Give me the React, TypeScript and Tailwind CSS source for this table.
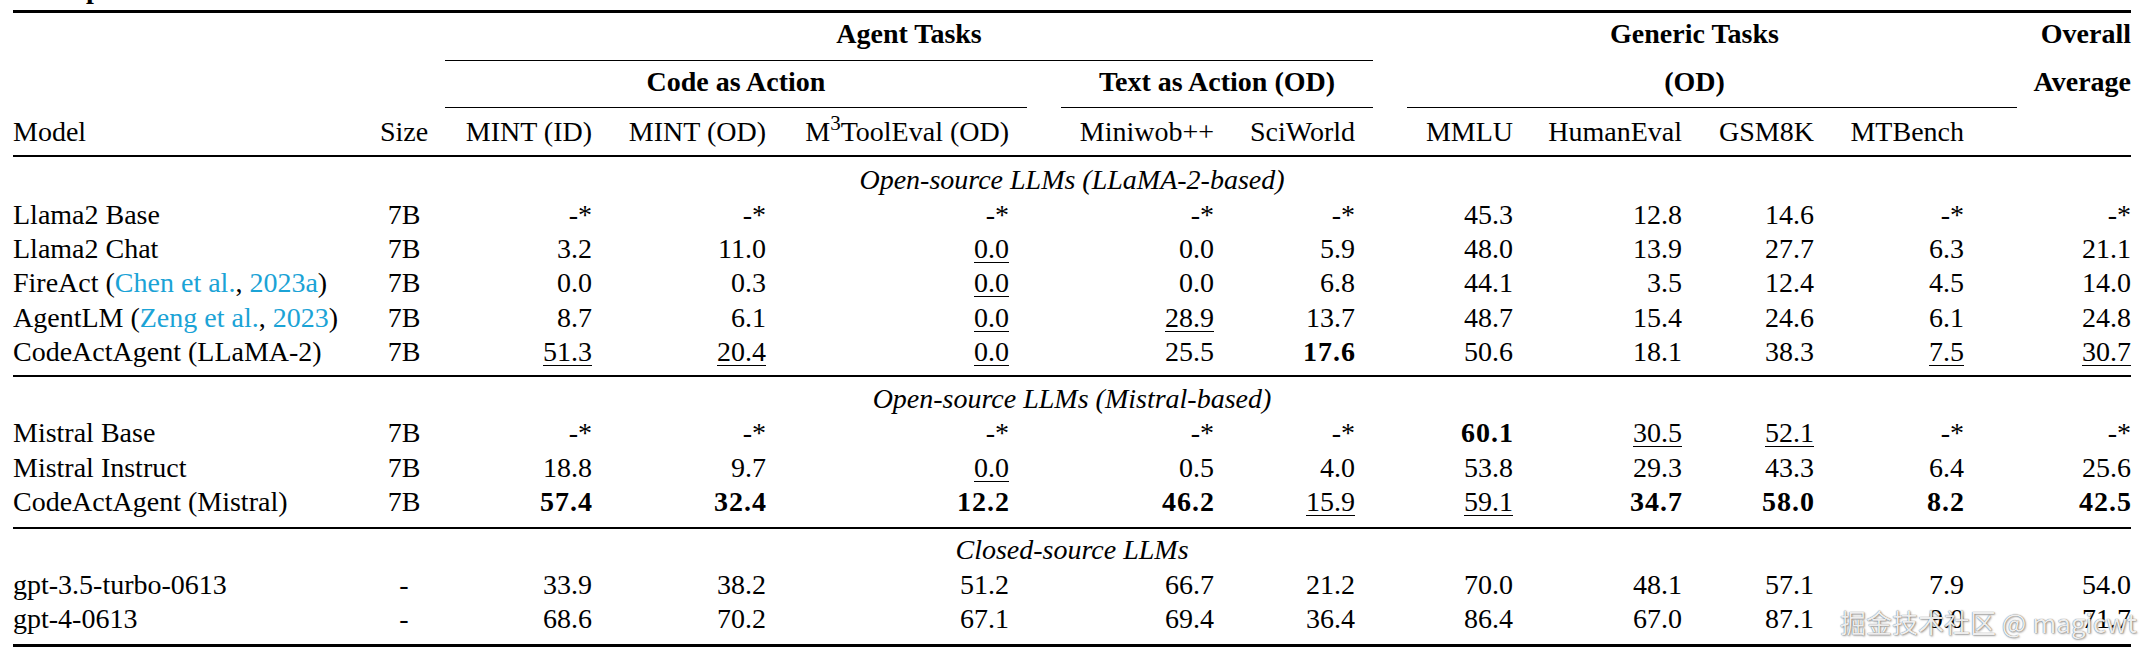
import React from "react";

// column template: Model | Size | MINT(ID) | MINT(OD) | M3ToolEval | Miniwob++ | SciWorld | MMLU | HumanEval | GSM8K | MTBench | Overall
const COLS =
  "grid grid-cols-[357px_68px_172px_174px_243px_205px_141px_158px_169px_132px_150px_149px]";

type Row = { name: React.ReactNode; size: string; vals: string[] };

/* ================= DATA ================= */
const llama: Row[] = [
  { name: "Llama2 Base", size: "7B", vals: ["-*", "-*", "-*", "-*", "-*", "45.3", "12.8", "14.6", "-*", "-*"] },
  { name: "Llama2 Chat", size: "7B", vals: ["3.2", "11.0", "_0.0_", "0.0", "5.9", "48.0", "13.9", "27.7", "6.3", "21.1"] },
  {
    name: (
      <>
        FireAct (<span className="text-[#1ba3d6]">Chen et al.</span>, <span className="text-[#1ba3d6]">2023a</span>)
      </>
    ),
    size: "7B",
    vals: ["0.0", "0.3", "_0.0_", "0.0", "6.8", "44.1", "3.5", "12.4", "4.5", "14.0"],
  },
  {
    name: (
      <>
        AgentLM (<span className="text-[#1ba3d6]">Zeng et al.</span>, <span className="text-[#1ba3d6]">2023</span>)
      </>
    ),
    size: "7B",
    vals: ["8.7", "6.1", "_0.0_", "_28.9_", "13.7", "48.7", "15.4", "24.6", "6.1", "24.8"],
  },
  { name: "CodeActAgent (LLaMA-2)", size: "7B", vals: ["_51.3_", "_20.4_", "_0.0_", "25.5", "**17.6**", "50.6", "18.1", "38.3", "_7.5_", "_30.7_"] },
];

const mistral: Row[] = [
  { name: "Mistral Base", size: "7B", vals: ["-*", "-*", "-*", "-*", "-*", "**60.1**", "_30.5_", "_52.1_", "-*", "-*"] },
  { name: "Mistral Instruct", size: "7B", vals: ["18.8", "9.7", "_0.0_", "0.5", "4.0", "53.8", "29.3", "43.3", "6.4", "25.6"] },
  { name: "CodeActAgent (Mistral)", size: "7B", vals: ["**57.4**", "**32.4**", "**12.2**", "**46.2**", "_15.9_", "_59.1_", "**34.7**", "**58.0**", "**8.2**", "**42.5**"] },
];

const closed: Row[] = [
  { name: "gpt-3.5-turbo-0613", size: "-", vals: ["33.9", "38.2", "51.2", "66.7", "21.2", "70.0", "48.1", "57.1", "7.9", "54.0"] },
  { name: "gpt-4-0613", size: "-", vals: ["68.6", "70.2", "67.1", "69.4", "36.4", "86.4", "67.0", "87.1", "9.0", "71.7"] },
];

/* ================= CELLS ================= */
function Val({ v }: { v: string }) {
  if (v.startsWith("**"))
    return <span className="font-bold tracking-[1px] -mr-[1px]">{v.slice(2, -2)}</span>;
  if (v.startsWith("_"))
    return <span className="underline decoration-1 underline-offset-[4px]">{v.slice(1, -1)}</span>;
  return <>{v}</>;
}

function DataRow({ row }: { row: Row }) {
  return (
    <div className={`${COLS} h-[34.4px] leading-[34.4px]`}>
      <div className="whitespace-nowrap">{row.name}</div>
      <div className="text-center">{row.size}</div>
      {row.vals.map((v, i) => (
        <div key={i} className={i === 9 ? "text-right whitespace-nowrap" : "text-right whitespace-nowrap pr-[18px]"}>
          <Val v={v} />
        </div>
      ))}
    </div>
  );
}

function Section({ title, className }: { title: string; className: string }) {
  return <div className={`h-[34.4px] leading-[34.4px] text-center italic ${className}`}>{title}</div>;
}

export default function App() {
  return (
    <div className="relative w-[2148px] h-[660px] overflow-hidden bg-white text-black text-[28px] font-['Liberation_Serif','Times_New_Roman',serif]">
      <div className="ml-[13px] w-[2118px]">
        {/* caption fragment above the table */}
        <div className="h-[10px] overflow-hidden">
          <div className="ml-[73px] -mt-[28px] font-bold leading-[34.4px]">p</div>
        </div>

        {/* toprule */}
        <div className="h-[3px] bg-black" />

        {/* HEADER ROW A */}
        <div className={`${COLS} mt-[4.35px] h-[34.4px] leading-[34.4px] font-bold`}>
          <div className="col-start-3 col-span-5 pl-[7px] text-center">Agent Tasks</div>
          <div className="col-start-8 col-span-4 pl-[34px] text-center">Generic Tasks</div>
          <div className="col-start-12 text-right">Overall</div>
        </div>

        <div className={`${COLS} mt-[8.25px] h-[1.5px]`}>
          <div className="col-start-3 col-span-5 ml-[7px] bg-black" />
        </div>

        {/* HEADER ROW B */}
        <div className={`${COLS} mt-[3.85px] h-[34.4px] leading-[34.4px] font-bold`}>
          <div className="col-start-3 col-span-3 pl-[7px] text-center">Code as Action</div>
          <div className="col-start-6 col-span-2 pl-[34px] text-center whitespace-nowrap">Text as Action (OD)</div>
          <div className="col-start-8 col-span-4 pl-[34px] text-center">(OD)</div>
          <div className="col-start-12 text-right">Average</div>
        </div>

        <div className={`${COLS} mt-[7.25px] h-[1.5px]`}>
          <div className="col-start-3 col-span-3 ml-[7px] bg-black" />
          <div className="col-start-6 col-span-2 ml-[34px] bg-black" />
          <div className="col-start-8 col-span-4 ml-[34px] -mr-[35px] bg-black" />
        </div>

        {/* HEADER ROW C */}
        <div className={`${COLS} mt-[6.35px] h-[34.4px] leading-[34.4px] whitespace-nowrap`}>
          <div>Model</div>
          <div className="text-center">Size</div>
          <div className="text-right pr-[18px]">MINT (ID)</div>
          <div className="text-right pr-[18px]">MINT (OD)</div>
          <div className="text-right pr-[18px]">
            M<sup>3</sup>ToolEval (OD)
          </div>
          <div className="text-right pr-[18px]">Miniwob++</div>
          <div className="text-right pr-[18px]">SciWorld</div>
          <div className="text-right pr-[18px]">MMLU</div>
          <div className="text-right pr-[18px]">HumanEval</div>
          <div className="text-right pr-[18px]">GSM8K</div>
          <div className="text-right pr-[18px]">MTBench</div>
          <div />
        </div>

        {/* midrule */}
        <div className="mt-[5.75px] h-[2px] bg-black" />

        <Section title="Open-source LLMs (LLaMA-2-based)" className="mt-[6.35px]" />
        {llama.map((r, i) => (
          <DataRow key={i} row={r} />
        ))}

        <div className="mt-[5.25px] h-[2px] bg-black" />

        <Section title="Open-source LLMs (Mistral-based)" className="mt-[4.85px]" />
        {mistral.map((r, i) => (
          <DataRow key={i} row={r} />
        ))}

        <div className="mt-[7.55px] h-[2px] bg-black" />

        <Section title="Closed-source LLMs" className="mt-[4.35px]" />
        {closed.map((r, i) => (
          <DataRow key={i} row={r} />
        ))}

        {/* bottomrule */}
        <div className="mt-[7.45px] h-[3px] bg-black" />
      </div>

      {/* watermark */}
      <div className="absolute left-[1840px] top-[606px] whitespace-nowrap text-[26px] leading-[32px] text-white/90 font-['Noto_Sans_CJK_SC','Noto_Sans',sans-serif] [text-shadow:0_0_1px_rgba(0,0,0,0.7),1px_1px_2px_rgba(0,0,0,0.35)]">
        掘金技术社区 @ magicwt
      </div>
    </div>
  );
}
